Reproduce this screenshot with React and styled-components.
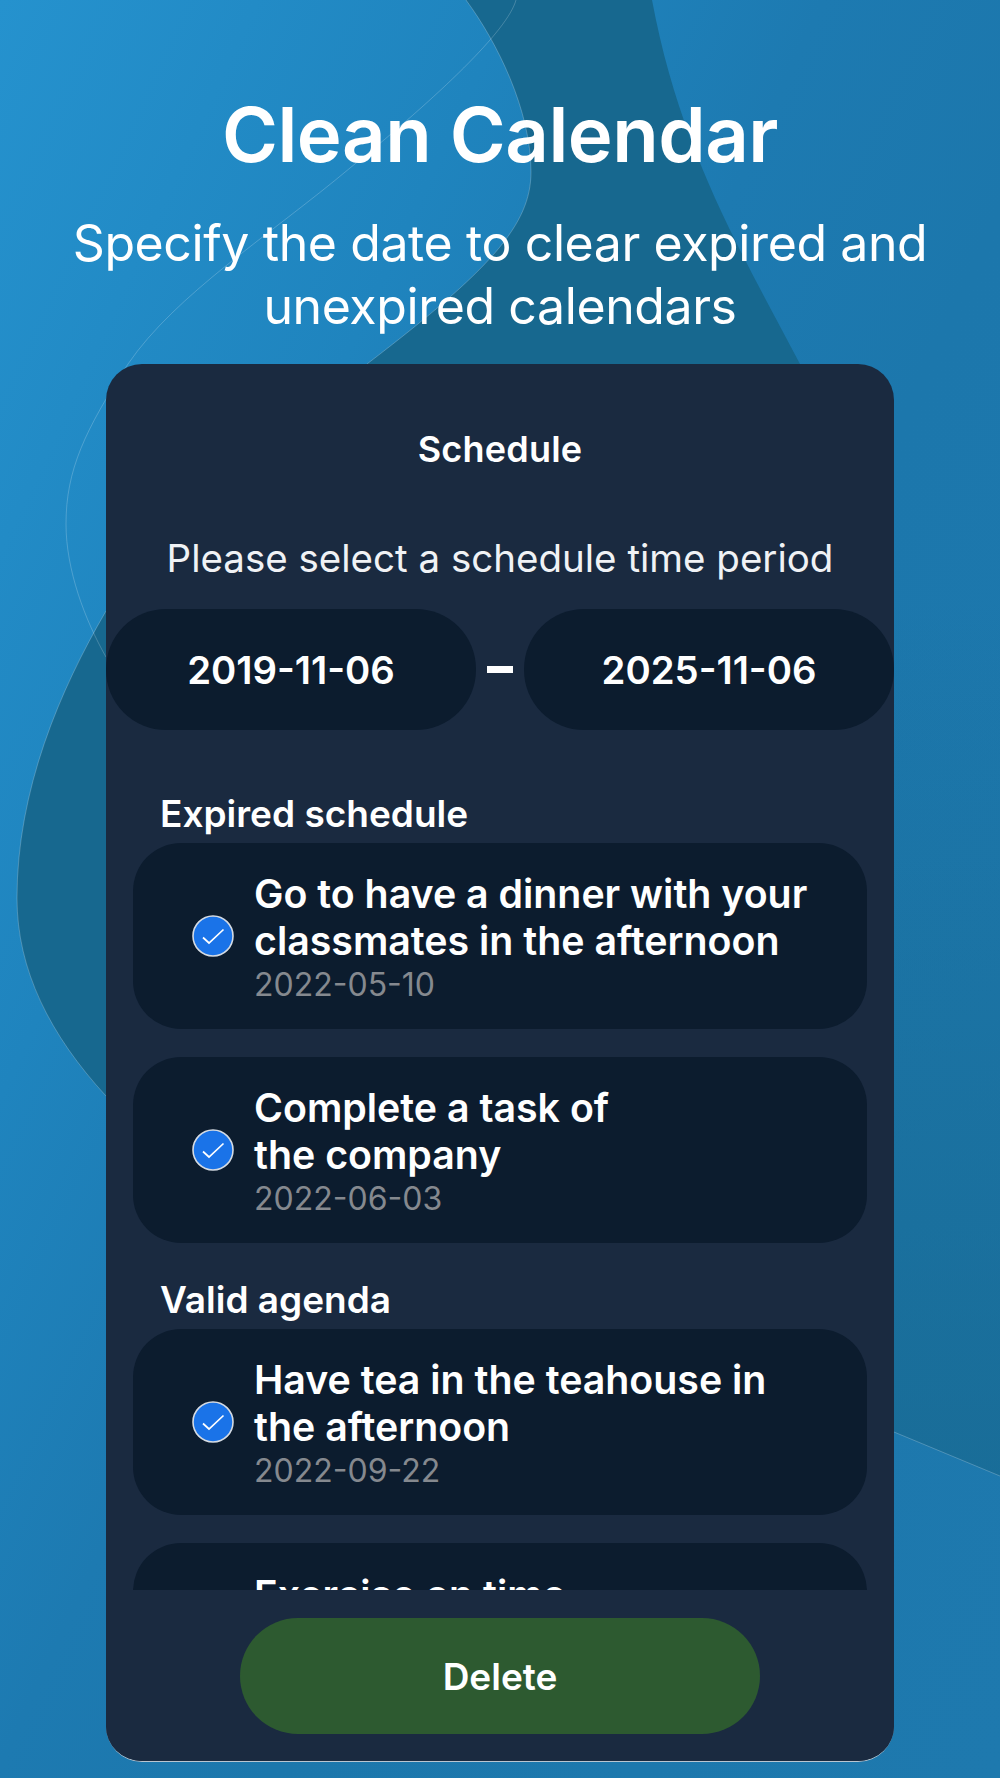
import React from "react";
import styled, { createGlobalStyle } from "styled-components";

const GlobalStyle = createGlobalStyle`
  html, body {
    margin: 0;
    padding: 0;
  }
  body {
    font-family: Inter, "Liberation Sans", sans-serif;
    color: #fff;
  }
`;

const Page = styled.div`
  position: relative;
  width: 1000px;
  height: 1778px;
  overflow: hidden;
  box-sizing: border-box;
  padding-top: 89px;
  display: flex;
  flex-direction: column;
  align-items: center;
  background: linear-gradient(115deg, #2592ce 0%, #1f84be 28%, #1d7ab1 45%, #1c77ac 60%, #1e79ae 100%);
`;

const Backdrop = styled.svg`
  position: absolute;
  inset: 0;
`;

const Header = styled.header`
  position: relative;
  width: 100%;
  text-align: center;
`;

const Title = styled.h1`
  margin: 0;
  font-size: 76px;
  line-height: 90px;
  font-weight: 600;
  letter-spacing: -0.5px;
`;

const Subtitle = styled.p`
  margin: 33px 0 0;
  font-size: 50px;
  line-height: 63px;
  font-weight: 400;
  letter-spacing: -0.4px;
`;

const Card = styled.section`
  position: relative;
  width: 788px;
  height: 1398px;
  margin-top: 26px;
  box-sizing: border-box;
  background: #1a2a40;
  border-radius: 36px;
  border-bottom: 1px solid #b9c6d2;
  display: flex;
  flex-direction: column;
  overflow: hidden;
`;

const CardTitle = styled.h2`
  margin: 64px 0 0;
  text-align: center;
  font-size: 36px;
  line-height: 42px;
  font-weight: 600;
  letter-spacing: 0.2px;
`;

const Prompt = styled.p`
  margin: 65px 0 0;
  text-align: center;
  font-size: 38.5px;
  line-height: 46px;
  font-weight: 400;
  color: #f0f2f5;
`;

const DateRow = styled.div`
  margin-top: 28px;
  display: flex;
  align-items: center;
  justify-content: space-between;
`;

const DatePill = styled.div`
  width: 370px;
  height: 121px;
  border-radius: 60px;
  background: #0c1c2e;
  display: flex;
  align-items: center;
  justify-content: center;
  font-size: 38.3px;
  font-weight: 600;
`;

const Dash = styled.span`
  width: 26px;
  height: 7px;
  background: #fff;
`;

const Scroller = styled.div`
  height: 797px;
  margin-top: 55px;
  padding: 8px 27px 0;
  overflow: hidden;
  flex: none;
`;

const GroupLabel = styled.h3`
  margin: ${({ $first }) => ($first ? "0" : "36px")} 0 8px 27px;
  font-size: 37px;
  line-height: 42px;
  font-weight: 600;
`;

const Item = styled.div`
  height: 186px;
  margin-bottom: 28px;
  border-radius: 48px;
  background: #0c1c2e;
  display: flex;
  align-items: center;
  padding-left: 59px;
  gap: 20px;
`;

const Check = styled.svg`
  width: 42px;
  height: 42px;
  flex: none;
`;

const ItemBody = styled.div`
  display: flex;
  flex-direction: column;
  min-height: 132px;
  padding-top: 4px;
`;

const ItemName = styled.div`
  font-size: 39.3px;
  line-height: 46.5px;
  font-weight: 600;
`;

const ItemDate = styled.div`
  font-size: 32px;
  line-height: 41px;
  color: #85898f;
`;

const Footer = styled.div`
  flex: 1;
  display: flex;
  justify-content: center;
  padding-top: 28px;
  background: #1a2a40;
`;

const DeleteButton = styled.button`
  width: 520px;
  height: 116px;
  border: 0;
  border-radius: 58px;
  background: #2d5a30;
  color: #fff;
  font-family: inherit;
  font-size: 37px;
  font-weight: 600;
`;

const CheckIcon = () => (
  <Check viewBox="0 0 42 42">
    <circle cx="21" cy="21" r="20" fill="#1a73e8" stroke="#d5dbe3" strokeWidth="1.6" />
    <path d="M11 22.5L17 28L31.5 14.5" fill="none" stroke="#fff" strokeWidth="1.7" />
  </Check>
);

const groups = [
  {
    label: "Expired schedule",
    items: [
      { name: ["Go to have a dinner with your", "classmates in the afternoon"], date: "2022-05-10" },
      { name: ["Complete a task of", "the company"], date: "2022-06-03" },
    ],
  },
  {
    label: "Valid agenda",
    items: [
      { name: ["Have tea in the teahouse in", "the afternoon"], date: "2022-09-22" },
      { name: ["Exercise on time"] },
    ],
  },
];

const App = () => (
  <Page>
    <GlobalStyle />
    <Backdrop width="1000" height="1778" viewBox="0 0 1000 1778">
      <defs>
        <linearGradient id="rightShade" gradientUnits="userSpaceOnUse" x1="0" y1="600" x2="0" y2="1476">
          <stop offset="0" stopColor="#17688f" stopOpacity="0" />
          <stop offset="1" stopColor="#17688f" stopOpacity="0.7" />
        </linearGradient>
      </defs>
      <path
        d="M466 0C497 42 531 110 531 172C531 225 490 270 367 364L106 611C60 690 17 790 17 898C17 970 50 1035 106 1096L500 1000L800 364C740 250 680 150 652 0Z"
        fill="#17688f"
      />
      <path d="M800 364H1000V1476L894 1432L700 1300Z" fill="url(#rightShade)" />
      <path
        d="M466 0C497 42 531 110 531 172C531 225 490 270 367 364M106 611C60 690 17 790 17 898C17 970 50 1035 106 1096M894 1432L1000 1476"
        fill="none"
        stroke="#ffffff"
        strokeOpacity="0.22"
      />
      <path
        d="M516 0C508 30 440 95 350 168C270 235 175 295 128 364C85 430 66 470 66 524C66 570 85 620 106 657"
        fill="none"
        stroke="#ffffff"
        strokeOpacity="0.2"
      />
    </Backdrop>
    <Header>
      <Title>Clean Calendar</Title>
      <Subtitle>
        Specify the date to clear expired and
        <br />
        unexpired calendars
      </Subtitle>
    </Header>
    <Card>
      <CardTitle>Schedule</CardTitle>
      <Prompt>Please select a schedule time period</Prompt>
      <DateRow>
        <DatePill>2019-11-06</DatePill>
        <Dash />
        <DatePill>2025-11-06</DatePill>
      </DateRow>
      <Scroller>
        {groups.map((group, i) => (
          <React.Fragment key={group.label}>
            <GroupLabel $first={i === 0}>{group.label}</GroupLabel>
            {group.items.map((item) => (
              <Item key={item.name[0]}>
                <CheckIcon />
                <ItemBody>
                  {item.name.map((line) => (
                    <ItemName key={line}>{line}</ItemName>
                  ))}
                  {item.date && <ItemDate>{item.date}</ItemDate>}
                </ItemBody>
              </Item>
            ))}
          </React.Fragment>
        ))}
      </Scroller>
      <Footer>
        <DeleteButton>Delete</DeleteButton>
      </Footer>
    </Card>
  </Page>
);

export default App;
